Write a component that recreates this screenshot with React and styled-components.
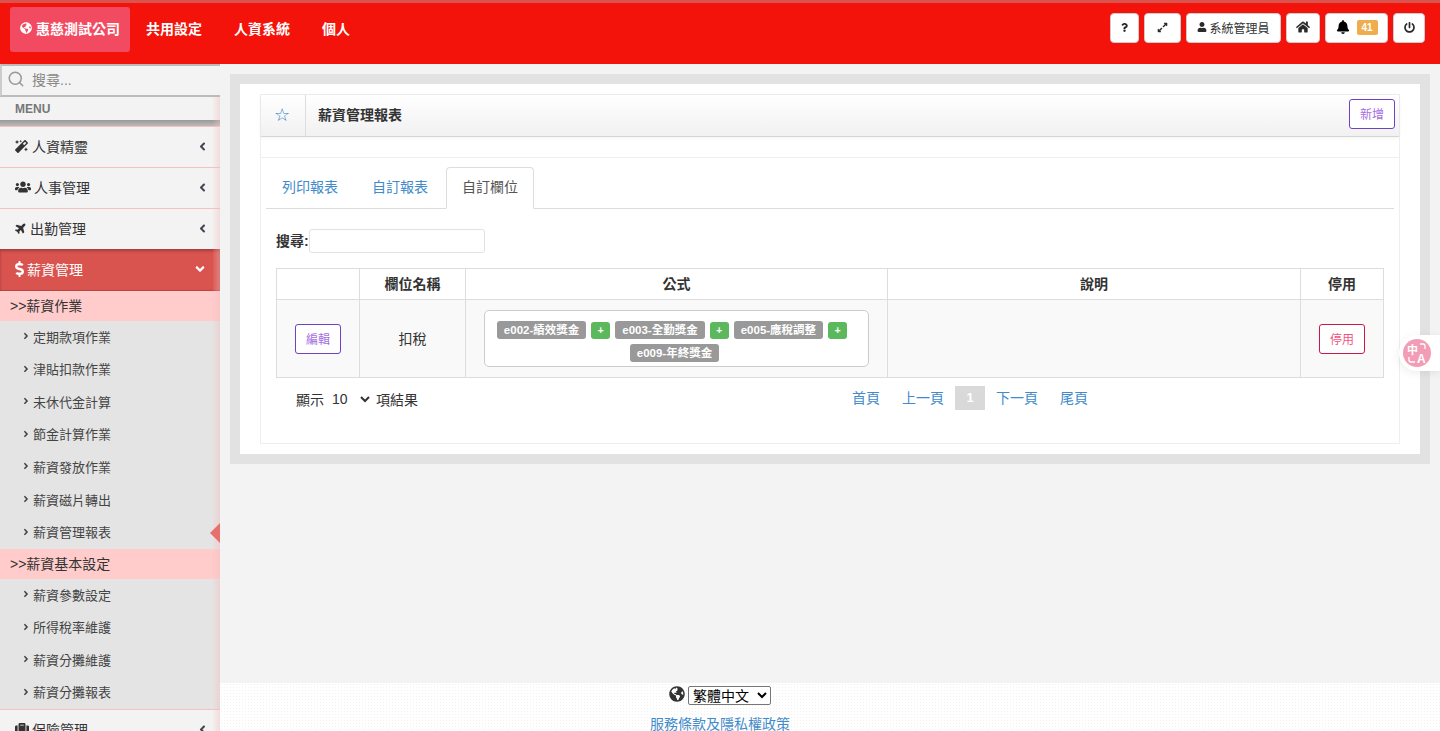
import React from 'react';
import styled, { createGlobalStyle } from 'styled-components';
import {
  FaQuestion, FaExpandAlt, FaUser, FaHome, FaBell, FaPowerOff, FaMagic, FaUsers, FaPlane,
  FaDollarSign, FaGlobeAmericas, FaSuitcase, FaAngleLeft, FaAngleDown, FaAngleRight,
} from 'react-icons/fa';
import { Search } from 'lucide-react';

const FONT = '"Liberation Sans", "Noto Sans CJK TC", sans-serif';

const Global = createGlobalStyle`
  html, body { margin: 0; height: 731px; overflow: hidden; background: #f3f3f3; }
  body { font-family: ${FONT}; font-size: 14px; color: #333; }
  * { box-sizing: border-box; }
  a { color: #428bca; text-decoration: none; }
`;

const Page = styled.div`
  height: 731px; display: flex; flex-direction: column; position: relative; overflow: hidden;
`;
const TopBar = styled.header`
  height: 64px; flex: none; background: #f4130a; border-top: 3px solid #d9534f;
  display: flex; align-items: flex-start; justify-content: space-between; padding: 4px 15px 0 10px;
`;
const NavLeft = styled.nav`display: flex; align-items: center;`;
const Brand = styled.a`
  width: 120px; height: 45px; background: #f24a60; border-radius: 3px; color: #fff; font-weight: 700;
  font-size: 14px; display: flex; align-items: center; justify-content: center; gap: 4px; padding-bottom: 3px;
  svg { font-size: 12px; }
`;
const NavLink = styled.a`
  color: #fff; font-weight: 700; font-size: 14px; padding: 0 16px; line-height: 45px;
`;
const NavRight = styled.div`display: flex; gap: 5px; padding-top: 6px;`;
const TopBtn = styled.button`
  height: 30px; width: ${p => p.$w}px; background: #fff; border: 1px solid #ccc; border-radius: 4px; padding: 0 0 2px;
  display: flex; align-items: center; justify-content: center; gap: ${p => p.$gap || 2}px;
  font: 12px ${FONT}; color: #333;
  svg { font-size: ${p => p.$icon || 11}px; color: ${p => p.$dark ? '#000' : '#2a2a2a'}; }
`;
const Badge = styled.span`
  background: #f0ad4e; color: #fff; font-size: 10px; font-weight: 700; border-radius: 2px;
  width: 21px; height: 15px; line-height: 15px; text-align: center; margin-left: 5px;
`;

const Body = styled.div`flex: 1; display: flex; min-height: 0;`;
const Sidebar = styled.aside`
  width: 220px; flex: none; display: flex; flex-direction: column; overflow: hidden; position: relative;
  background: #f3f3f3;
`;
const SearchBox = styled.div`
  height: 33px; flex: none; border-top: 2px solid #bbb; border-left: 2px solid #ccc; border-bottom: 2px solid #bbb;
  display: flex; align-items: center; gap: 7px; padding: 0 0 3px 5px; color: #888; font-size: 14px;
  svg { color: #999; }
`;
const MenuTitle = styled.div`
  height: 23px; flex: none; padding: 5px 15px 0; font-size: 12px; line-height: 14px; font-weight: 700; color: #777;
`;
const MenuBar = styled.div`
  height: 7px; flex: none; background: linear-gradient(#999, #bbb); border-bottom: 1px solid #f5c0c0;
`;
const NavShade = styled.div`
  position: absolute; top: 33px; bottom: 0; right: 0; width: 7px; z-index: 2; pointer-events: none;
  background: linear-gradient(to right, rgba(245,190,190,.08), rgba(240,190,190,.45));
`;
const MenuItem = styled.div`
  height: 41px; flex: none; display: flex; align-items: center; padding: 0 11px 2px 15px;
  border-bottom: 1px solid #f5c0c0; font-size: 14px; color: #333; gap: ${p => p.$gap || 3}px;
  > svg { font-size: ${p => p.$icon || 13}px; color: #333; transform: rotate(${p => p.$rot || 0}deg); }
`;
const Chevron = styled.span`
  margin-left: auto; display: flex; svg { font-size: 13px; color: #445; }
`;
const ActiveItem = styled.div`
  height: 42px; margin-top: -1px; flex: none; display: flex; align-items: center; padding: 0 13px 2px 15px; gap: 3px; position: relative;
  background: #d9534f; color: #fff; font-size: 14px; box-shadow: inset 0 2px 3px rgba(0,0,0,.25), inset 0 -1px 1px rgba(0,0,0,.15);
  > svg { color: #fff; font-size: 16px; width: 9px; }
  span { margin-left: auto; display: flex; }
  span svg { font-size: 14px; color: #fff; }
`;
const SubHead = styled.div`
  height: 30px; flex: none; background: #ffcccb; color: #333; font-size: 14px; line-height: 30px; padding-left: 10px;
`;
const SubGroup = styled.div`background: #e4e4e4; flex: none;`;
const SubItem = styled.div`
  height: 32.55px; display: flex; align-items: center; gap: 4px; padding: 0 0 2px 23px; font-size: 13px; color: #444;
  position: relative;
  svg { font-size: 10px; color: #444; width: 6px; }
`;
const Caret = styled.i`
  position: absolute; right: 0; top: 7px; width: 0; height: 0; z-index: 3;
  border-top: 10px solid transparent; border-bottom: 10px solid transparent; border-right: 10px solid #e8706c;
`;
const SubEnd = styled.div`height: 1px; background: #f5c0c0; flex: none;`;

const Main = styled.main`flex: 1; display: flex; flex-direction: column; min-width: 0;`;
const Outer = styled.section`
  margin: 10px 10px 0; height: 390px; flex: none; border: 10px solid #e2e2e2; background: #fff; padding: 10px 20px;
`;
const Panel = styled.div`height: 350px; border: 1px solid #eee; background: #fff;`;
const PanelHead = styled.div`
  height: 42px; display: flex; align-items: center; background: linear-gradient(#fff, #f1f1f1);
  border-bottom: 1px solid #d5d5d5; box-shadow: 0 1px 4px rgba(0,0,0,.05);
`;
const StarCell = styled.div`
  width: 45px; height: 100%; display: flex; align-items: center; justify-content: center; border-right: 1px solid #ddd;
  color: #2f80c8; font: 18px "DejaVu Sans", sans-serif; padding: 0 2px 3px 0;
`;
const PanelTitle = styled.h2`margin: 0 0 4px 12px; font-size: 14px; font-weight: 700; color: #333; flex: 1;`;
const OutlineBtn = styled.button`
  height: 30px; width: 46px; background: #fff; border: 1px solid ${p => p.$c}; border-radius: 3px; padding: 0;
  color: ${p => p.$t}; font: 12px ${FONT}; ${p => p.$mr ? `margin: 0 ${p.$mr}px 4px 0;` : ''}
`;
const HeadGap = styled.div`height: 21px; border-bottom: 1px solid #eee;`;
const Content = styled.div`padding: 9px 5px 0;`;
const Tabs = styled.div`display: flex; gap: 2px; height: 42px; border-bottom: 1px solid #ddd;`;
const Tab = styled.a`
  width: 88px; height: 42px; line-height: 39px; text-align: center; font-size: 14px; border: 1px solid transparent;
  border-radius: 4px 4px 0 0; color: #428bca;
  ${p => p.$active ? 'border-color: #ddd; border-bottom-color: #fff; color: #555; background: #fff;' : ''}
`;
const SearchRow = styled.div`
  display: flex; align-items: flex-start; margin: 20px 0 15px 10px; height: 24px; line-height: 24px; font-size: 14px; font-weight: 700; color: #333;
`;
const SearchInput = styled.input`
  width: 176px; height: 24px; border: 1px solid #e2e2e2; border-radius: 3px; background: #fff; margin: 0;
`;
const Table = styled.table`
  margin-left: 10px; width: 1107px; border-collapse: collapse; table-layout: fixed; font-size: 14px;
  th, td { border: 1px solid #ddd; text-align: center; color: #333; padding: 0; }
  th { height: 31px; font-weight: 700; padding-bottom: 3px; }
  td { height: 78px; background: #f9f9f9; }
`;
const NameText = styled.span`display: block; margin-top: -2px;`;
const Formula = styled.div`
  margin: 0 18px; height: 57px; background: #fff; border: 1px solid #ccc; border-radius: 5px;
  padding: 9px 14px 0 10px; line-height: 23px; text-align: center;
`;
const Chip = styled.span`
  display: inline-block; background: #999; color: #fff; font-size: 11.5px; font-weight: 700; line-height: 18px;
  height: 18px; padding: 0 7px; border-radius: 3px; vertical-align: top; margin: 1px 0 0;
`;
const Plus = styled(Chip)`
  background: #5cb85c; font-size: 10px; width: 19px; padding: 0; text-align: center; margin: 2px 5px 0; height: 17px; line-height: 17px;
`;
const FootRow = styled.div`display: flex; align-items: flex-start; margin-top: 8px; height: 24px;`;
const Length = styled.div`
  width: 575px; padding-left: 30px; font-size: 14px; color: #333; display: flex; align-items: center; height: 26px;
`;
const LengthSelect = styled.select`
  border: none; background: transparent; font: 14px ${FONT}; color: #333; width: 45px; margin: 0 3px 0 4px; padding: 0; outline: none;
`;
const Pager = styled.div`display: flex; align-items: center; height: 24px;`;
const PageLink = styled.a`
  padding: 0 11px; line-height: 24px; font-size: 14px; color: #428bca;
  ${p => p.$cur ? 'background: #d9d9d9; color: #fff; width: 30px; padding: 0; text-align: center; font-weight: 700; font-size: 13px;' : ''}
`;

const Footer = styled.footer`
  margin-top: auto; height: 48px; flex: none; padding-right: 220px; text-align: center; background-color: #fff;
  background-image: radial-gradient(#f2f2f2 1px, transparent 1px); background-size: 3px 3px;
`;
const LangRow = styled.div`
  display: flex; justify-content: center; align-items: center; gap: 3px; height: 23px; padding-top: 2px; color: #333;
  svg { font-size: 16px; margin-top: -3px; }
`;
const LangSelect = styled.select`
  width: 83px; height: 19px; font: 14px ${FONT}; color: #000; background: #fff; border: 1px solid #767676; border-radius: 2px; padding: 0;
`;
const Policy = styled.a`display: block; margin-top: 8px; font-size: 14px; line-height: 20px;`;

const Translate = styled.div`
  position: absolute; right: 0; top: 335px; width: 41px; height: 36px; background: #fff; border-radius: 18px 0 0 18px;
  box-shadow: 0 2px 8px rgba(0,0,0,.08); display: flex; align-items: center; padding-left: 4px; z-index: 5;
`;

const menuA = ['定期款項作業', '津貼扣款作業', '未休代金計算', '節金計算作業', '薪資發放作業', '薪資磁片轉出', '薪資管理報表'];
const menuB = ['薪資參數設定', '所得稅率維護', '薪資分攤維護', '薪資分攤報表'];

function Sub({ items, caretOn }) {
  return (
    <SubGroup>
      {items.map(t => (
        <SubItem key={t}>
          <FaAngleRight />{t}
          {t === caretOn && <Caret />}
        </SubItem>
      ))}
    </SubGroup>
  );
}

export default function App() {
  return (
    <Page>
      <Global />
      <TopBar>
        <NavLeft>
          <Brand><FaGlobeAmericas />惠慈測試公司</Brand>
          <NavLink>共用設定</NavLink>
          <NavLink>人資系統</NavLink>
          <NavLink>個人</NavLink>
        </NavLeft>
        <NavRight>
          <TopBtn $w={29} $icon={9}><FaQuestion /></TopBtn>
          <TopBtn $w={37}><FaExpandAlt /></TopBtn>
          <TopBtn $w={95} $icon={10}><FaUser />系統管理員</TopBtn>
          <TopBtn $w={34} $icon={14}><FaHome /></TopBtn>
          <TopBtn $w={63} $icon={14} $dark><FaBell /><Badge>41</Badge></TopBtn>
          <TopBtn $w={32}><FaPowerOff /></TopBtn>
        </NavRight>
      </TopBar>
      <Body>
        <Sidebar>
          <SearchBox><Search size={18} strokeWidth={2} />搜尋...</SearchBox>
          <NavShade />
          <MenuTitle>MENU</MenuTitle>
          <MenuBar />
          <MenuItem $icon={13} $gap={4}><FaMagic />人資精靈<Chevron><FaAngleLeft /></Chevron></MenuItem>
          <MenuItem $icon={16}><FaUsers />人事管理<Chevron><FaAngleLeft /></Chevron></MenuItem>
          <MenuItem $icon={12} $rot={-45}><FaPlane />出勤管理<Chevron><FaAngleLeft /></Chevron></MenuItem>
          <ActiveItem><FaDollarSign />薪資管理<span><FaAngleDown /></span></ActiveItem>
          <SubHead>&gt;&gt;薪資作業</SubHead>
          <Sub items={menuA} caretOn="薪資管理報表" />
          <SubHead>&gt;&gt;薪資基本設定</SubHead>
          <Sub items={menuB} />
          <SubEnd />
          <MenuItem $icon={14}><FaSuitcase />保險管理<Chevron><FaAngleLeft /></Chevron></MenuItem>
        </Sidebar>
        <Main>
          <Outer>
            <Panel>
              <PanelHead>
                <StarCell>☆</StarCell>
                <PanelTitle>薪資管理報表</PanelTitle>
                <OutlineBtn $c="#6f42c1" $t="#a56de2" $mr={4}>新增</OutlineBtn>
              </PanelHead>
              <HeadGap />
              <Content>
                <Tabs>
                  <Tab>列印報表</Tab>
                  <Tab>自訂報表</Tab>
                  <Tab $active>自訂欄位</Tab>
                </Tabs>
                <SearchRow>搜尋:<SearchInput /></SearchRow>
                <Table>
                  <colgroup>
                    <col width="83" /><col width="106" /><col width="422" /><col width="413" /><col width="83" />
                  </colgroup>
                  <thead>
                    <tr><th></th><th>欄位名稱</th><th>公式</th><th>說明</th><th>停用</th></tr>
                  </thead>
                  <tbody>
                    <tr>
                      <td><OutlineBtn $c="#6f42c1" $t="#a56de2">編輯</OutlineBtn></td>
                      <td><NameText>扣稅</NameText></td>
                      <td>
                        <Formula>
                          <Chip>e002-績效獎金</Chip><Plus>+</Plus>
                          <Chip>e003-全勤獎金</Chip><Plus>+</Plus>
                          <Chip>e005-應稅調整</Chip><Plus>+</Plus>
                          <Chip>e009-年終獎金</Chip>
                        </Formula>
                      </td>
                      <td></td>
                      <td><OutlineBtn $c="#c9184a" $t="#f0567f">停用</OutlineBtn></td>
                    </tr>
                  </tbody>
                </Table>
                <FootRow>
                  <Length>
                    顯示
                    <LengthSelect defaultValue="10"><option>10</option><option>25</option></LengthSelect>
                    項結果
                  </Length>
                  <Pager>
                    <PageLink>首頁</PageLink>
                    <PageLink>上一頁</PageLink>
                    <PageLink $cur>1</PageLink>
                    <PageLink>下一頁</PageLink>
                    <PageLink>尾頁</PageLink>
                  </Pager>
                </FootRow>
              </Content>
            </Panel>
          </Outer>
          <Footer>
            <LangRow>
              <FaGlobeAmericas />
              <LangSelect defaultValue="繁體中文"><option>繁體中文</option><option>English</option></LangSelect>
            </LangRow>
            <Policy>服務條款及隱私權政策</Policy>
          </Footer>
        </Main>
      </Body>
      <Translate>
        <svg width="28" height="28" viewBox="0 0 28 28" aria-hidden="true">
          <circle cx="14" cy="14" r="14" fill="#f29cb5" />
          <text x="4" y="15" fontSize="11" fontWeight="700" fill="#fff" fontFamily={FONT}>中</text>
          <text x="14" y="24" fontSize="12" fontWeight="700" fill="#fff" fontFamily={FONT}>A</text>
          <path d="M17 5h3a2 2 0 0 1 2 2v3M6 18v3a2 2 0 0 0 2 2h4" stroke="#fff" strokeWidth="1.3" fill="none" />
        </svg>
      </Translate>
    </Page>
  );
}
